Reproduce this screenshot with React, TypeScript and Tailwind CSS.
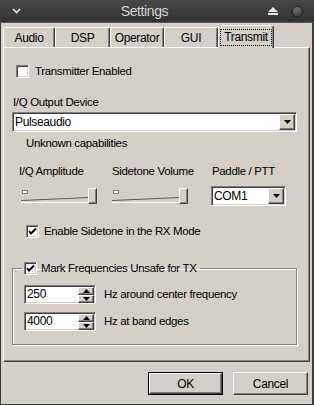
import React from 'react';

const raised =
  'border border-t-white border-l-white border-r-[#404040] border-b-[#404040] shadow-[inset_-1px_-1px_0_#808080]';
const sunken =
  'border border-t-[#808080] border-l-[#808080] border-r-white border-b-white shadow-[inset_1px_1px_0_#404040,inset_-1px_-1px_0_#d4d0c8]';

function Check({ checked }: { checked?: boolean }) {
  return (
    <div className={`w-[13px] h-[13px] bg-white shrink-0 flex items-center justify-center ${sunken}`}>
      {checked && (
        <svg width="9" height="9" viewBox="0 0 9 9">
          <path d="M1 4 L3 6.5 L8 1.5" stroke="#000" strokeWidth="2" fill="none" />
        </svg>
      )}
    </div>
  );
}

function DownArrow() {
  return (
    <svg width="7" height="4" viewBox="0 0 7 4">
      <path d="M0 0 H7 L3.5 4 Z" fill="#000" />
    </svg>
  );
}

function Combo({ value, className }: { value: string; className: string }) {
  return (
    <div className={`h-[20px] bg-white flex items-center ${sunken} ${className}`}>
      <span className="flex-1 pl-[2px] leading-[13px] text-[12px]">{value}</span>
      <div className={`w-[16px] h-[16px] mr-[1px] bg-[#d4d0c8] flex items-center justify-center ${raised}`}>
        <DownArrow />
      </div>
    </div>
  );
}

function Spin({ value }: { value: string }) {
  return (
    <div className={`w-[72px] h-[19px] bg-white flex items-center ${sunken}`}>
      <span className="flex-1 pl-[2px] leading-[13px] text-[12px]">{value}</span>
      <div className="flex flex-col mr-[1px]">
        <div className={`w-[16px] h-[8px] bg-[#d4d0c8] flex items-center justify-center ${raised}`}>
          <svg width="7" height="4" viewBox="0 0 7 4">
            <path d="M0 4 H7 L3.5 0 Z" fill="#000" />
          </svg>
        </div>
        <div className={`w-[16px] h-[8px] bg-[#d4d0c8] flex items-center justify-center ${raised}`}>
          <svg width="7" height="4" viewBox="0 0 7 4">
            <path d="M0 0 H7 L3.5 4 Z" fill="#000" />
          </svg>
        </div>
      </div>
    </div>
  );
}

function Slider() {
  return (
    <svg width="77" height="19" viewBox="0 0 77 19">
      <rect x="1.5" y="4.5" width="5" height="3" fill="#fff" stroke="#808080" />
      <line x1="0" y1="14.5" x2="68" y2="11.5" stroke="#5a5a5a" />
      <line x1="0" y1="16.5" x2="70" y2="16.5" stroke="#fff" />
      <rect x="67" y="2" width="9" height="16" fill="#d4d0c8" />
      <path d="M67.5 17.5 V2.5 H75.5" stroke="#fff" fill="none" />
      <path d="M75.5 2.5 V17.5 H67.5" stroke="#404040" fill="none" />
      <path d="M74.5 3.5 V16.5 H68.5" stroke="#808080" fill="none" />
    </svg>
  );
}

function Tab({ label, w, active }: { label: string; w: string; active?: boolean }) {
  return (
    <div
      className={`${w} ${
        active ? 'h-[23px] -mb-px relative z-10' : 'h-[20px]'
      } bg-[#d4d0c8] border-t border-l border-t-white border-l-white border-r border-r-[#404040] rounded-t-[2px] shadow-[inset_-1px_0_0_#808080] flex items-center justify-center text-[12px]`}
    >
      {active ? (
        <span className="border border-dotted border-black h-[17px] w-[52px] flex items-center justify-center">
          {label}
        </span>
      ) : (
        <span>{label}</span>
      )}
    </div>
  );
}

function Button({ label, def }: { label: string; def?: boolean }) {
  return (
    <div className={`w-[75px] h-[23px] ${def ? 'border border-black' : ''}`}>
      <div className={`w-full h-full flex items-center justify-center text-[12px] ${raised}`}>{label}</div>
    </div>
  );
}

export default function App() {
  return (
    <div className="w-[314px] h-[405px] bg-[#d4d0c8] flex flex-col font-['Liberation_Sans',Arial,sans-serif] text-[11.5px] tracking-[-0.35px] text-black overflow-hidden">
      {/* title bar */}
      <div className="h-[23px] bg-gradient-to-b from-[#474747] to-[#333333] flex items-center px-[12px] shrink-0 border-b border-[#5a5a5a]">
        <svg width="9" height="6" viewBox="0 0 9 6">
          <path d="M1 1 L4.5 4.5 L8 1" stroke="#e8e8e8" strokeWidth="1.6" fill="none" />
        </svg>
        <div className="flex-1 text-center text-[14px] tracking-[-0.4px] text-[#d6d6d6]">Settings</div>
        <svg width="10" height="8" viewBox="0 0 10 8" className="mr-[13px]">
          <path d="M0 5 L5 0 L10 5 Z" fill="#e8e8e8" />
          <rect x="0" y="6" width="10" height="2" fill="#e8e8e8" />
        </svg>
        <svg width="13" height="13" viewBox="0 0 13 13" className="-mr-[2px]">
          <defs>
            <radialGradient id="knob" cx="0.4" cy="0.35" r="0.7">
              <stop offset="0" stopColor="#6e6e6e" />
              <stop offset="1" stopColor="#363636" />
            </radialGradient>
          </defs>
          <circle cx="6.5" cy="6.5" r="5.5" fill="url(#knob)" stroke="#1e1e1e" />
        </svg>
      </div>

      <div className="flex-1 flex flex-col border-l border-r-2 border-b border-[#3a3a3a]">
        {/* tabs */}
        <div className="h-[24px] flex items-end pl-[2px] shrink-0">
          <Tab label="Audio" w="w-[52px]" />
          <Tab label="DSP" w="w-[55px]" />
          <Tab label="Operator" w="w-[54px]" />
          <Tab label="GUI" w="w-[54px]" />
          <Tab label="Transmit" w="w-[56px]" active />
        </div>

        {/* pane */}
        <div className="h-[315px] mx-[2px] border border-t-white border-l-white border-r-[#404040] border-b-[#404040] shadow-[inset_-1px_-1px_0_#808080] flex flex-col">
          <div className="mt-[17px] ml-[12px] h-[13px] flex items-center gap-[6px]">
            <Check />
            <span>Transmitter Enabled</span>
          </div>

          <div className="mt-[18px] ml-[9px] leading-[13px]">I/Q Output Device</div>
          <Combo value="Pulseaudio" className="mt-[3px] ml-[8px] w-[285px]" />
          <div className="mt-[5px] ml-[22px] leading-[13px]">Unknown capabilities</div>

          <div className="mt-[15px] ml-[15px] flex leading-[13px]">
            <span className="w-[93px]">I/Q Amplitude</span>
            <span className="w-[100px]">Sidetone Volume</span>
            <span>Paddle / PTT</span>
          </div>
          <div className="mt-[8px] ml-[15px] flex items-start">
            <div className="w-[93px] pl-[2px]">
              <Slider />
            </div>
            <div className="w-[99px]">
              <Slider />
            </div>
            <Combo value="COM1" className="w-[75px] h-[19px]" />
          </div>

          <div className="mt-[19px] ml-[22px] h-[13px] flex items-center gap-[5px]">
            <Check checked />
            <span>Enable Sidetone in the RX Mode</span>
          </div>

          <fieldset className="mt-[24px] ml-[8px] w-[285px] border border-[#808080] shadow-[inset_1px_1px_0_#fff,1px_1px_0_#fff] px-0 pb-[13px]">
            <legend className="ml-[9px] px-[2px]">
              <div className="h-[13px] flex items-center gap-[4px] pr-[2px]">
                <Check checked />
                <span>Mark Frequencies Unsafe for TX</span>
              </div>
            </legend>
            <div className="mt-[10px] pl-[11px] flex flex-col gap-[8px]">
              <div className="flex items-center gap-[8px]">
                <Spin value="250" />
                <span>Hz around center frequency</span>
              </div>
              <div className="flex items-center gap-[8px]">
                <Spin value="4000" />
                <span>Hz at band edges</span>
              </div>
            </div>
          </fieldset>
        </div>

        {/* buttons */}
        <div className="mt-[10px] flex justify-end gap-[10px] pr-[4px]">
          <Button label="OK" def />
          <Button label="Cancel" />
        </div>
      </div>
    </div>
  );
}
